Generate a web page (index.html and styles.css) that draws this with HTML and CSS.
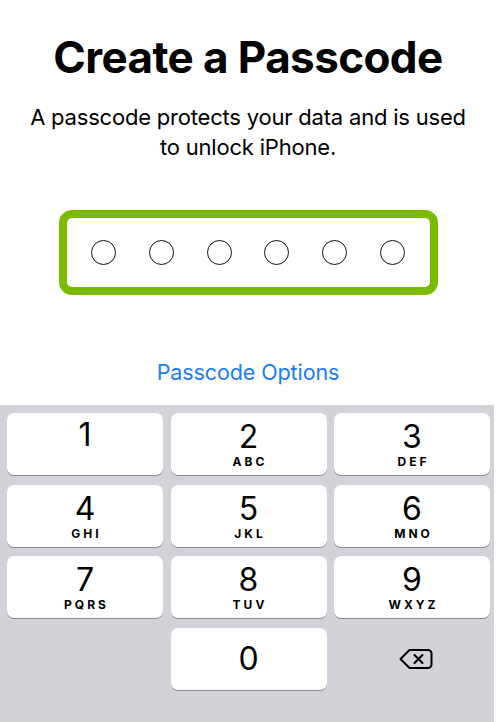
FILE: index.html
```html
<!DOCTYPE html>
<html>
<head>
<meta charset="utf-8">
<link rel="stylesheet" href="styles.css">
</head>
<body>
<div class="screen">
  <div class="top">
    <h1 class="title">Create a Passcode</h1>
    <p class="subtitle">A passcode protects your data and is used<br>to unlock iPhone.</p>
    <div class="code-box">
      <span class="dot"></span><span class="dot"></span><span class="dot"></span><span class="dot"></span><span class="dot"></span><span class="dot"></span>
    </div>
    <div class="options">Passcode Options</div>
  </div>
  <div class="keyboard">
    <div class="key single"><span class="digit">1</span></div>
    <div class="key"><span class="digit">2</span><span class="letters">ABC</span></div>
    <div class="key"><span class="digit">3</span><span class="letters">DEF</span></div>
    <div class="key"><span class="digit">4</span><span class="letters">GHI</span></div>
    <div class="key"><span class="digit">5</span><span class="letters">JKL</span></div>
    <div class="key"><span class="digit">6</span><span class="letters">MNO</span></div>
    <div class="key"><span class="digit">7</span><span class="letters">PQRS</span></div>
    <div class="key"><span class="digit">8</span><span class="letters">TUV</span></div>
    <div class="key"><span class="digit">9</span><span class="letters">WXYZ</span></div>
    <div class="blank"></div>
    <div class="key zero"><span class="digit">0</span></div>
    <div class="blank del">
      <svg class="del-icon" width="34" height="22" viewBox="0 0 34 22" fill="none" stroke="#000" stroke-width="2" stroke-linejoin="round" stroke-linecap="round">
        <path d="M10.5 2 H29 a3.5 3.5 0 0 1 3.5 3.5 V16.5 a3.5 3.5 0 0 1 -3.5 3.5 H10.5 L1.5 11 Z"/>
        <path d="M15.5 7 L23.5 15 M23.5 7 L15.5 15"/>
      </svg>
    </div>
  </div>
</div>
</body>
</html>
```

FILE: styles.css
```css
* { box-sizing: border-box; }
html, body { margin: 0; padding: 0; background: #fff; }
body { width: 496px; height: 722px; overflow: hidden; font-family: Inter, "Noto Sans", sans-serif; color: #000; }
.screen { display: flex; flex-direction: column; height: 722px; }
.top { display: flex; flex-direction: column; align-items: center; padding-top: 30px; height: 405px; }
.title { margin: 0; font-size: 44px; font-weight: 700; line-height: 54px; letter-spacing: -0.6px; }
.subtitle { margin: 18px 0 0; font-size: 22px; line-height: 30px; text-align: center; font-weight: 400; letter-spacing: -0.2px; }
.code-box {
  margin-top: 48px;
  width: 379px; height: 85px;
  border: 8.5px solid #7aba00; border-radius: 13px;
  display: flex; align-items: center; justify-content: center; gap: 32.8px;
}
.dot { width: 25px; height: 25px; border: 1.8px solid #111; border-radius: 50%; }
.options { margin-top: 64px; font-size: 21.5px; color: #1a7cf6; letter-spacing: -0.1px; }
.keyboard {
  flex: 1;
  width: 494px;
  background: #d1d3d9;
  display: grid;
  grid-template-columns: repeat(3, 156px);
  grid-auto-rows: 62px;
  column-gap: 7.5px; row-gap: 9.5px;
  padding: 8px 0 0 7px;
  align-content: start;
}
.key {
  background: #fff; border-radius: 7px;
  box-shadow: 0 1px 0 #898a8d;
  display: flex; flex-direction: column; align-items: center; justify-content: flex-start;
  padding-top: 10px;
}
.digit { display: block; font-size: 32px; font-weight: 400; line-height: 28px; height: 28px; }
.letters { display: block; font-size: 12px; font-weight: 700; letter-spacing: 3px; margin-right: -3px; line-height: 12px; height: 12px; margin-top: 5px; }
.single { padding-top: 8px; }
.zero { justify-content: center; padding-top: 0; }
.del { display: flex; align-items: center; justify-content: center; }
.del-icon { margin-left: 8px; margin-top: 1px; }
```
